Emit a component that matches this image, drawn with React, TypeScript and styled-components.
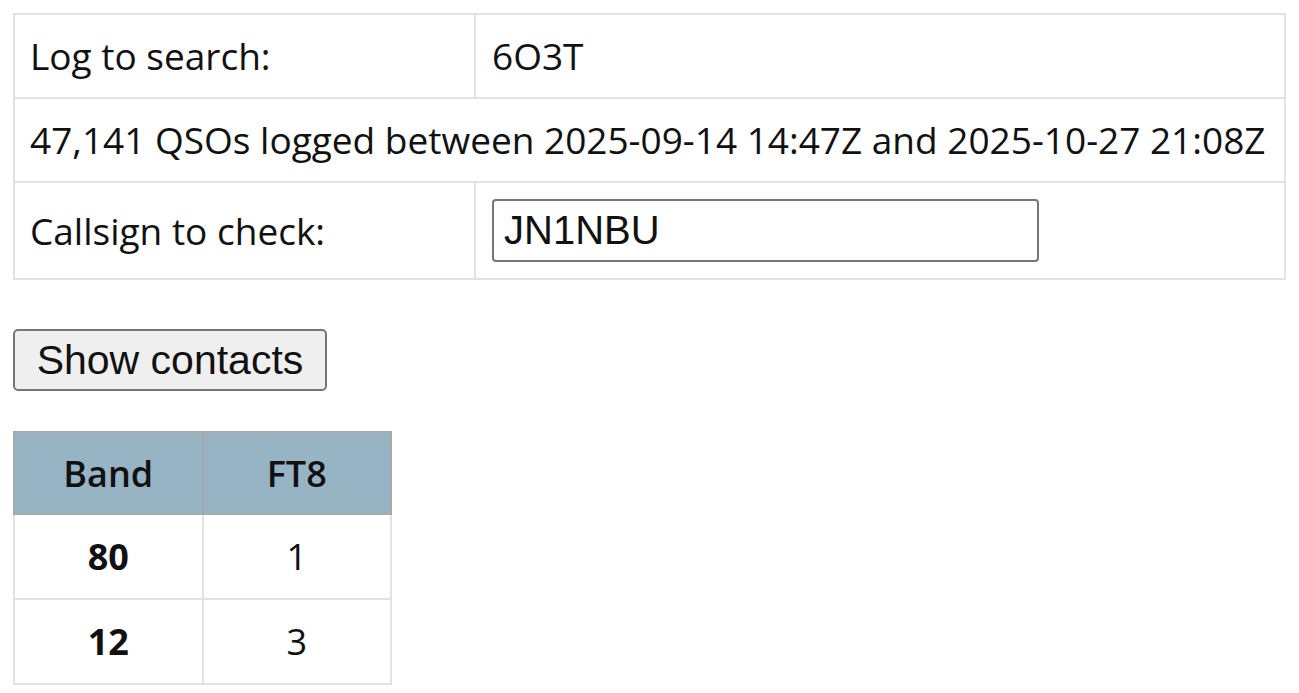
import React from "react";
import styled, { createGlobalStyle } from "styled-components";

const GlobalStyle = createGlobalStyle`
  body {
    margin: 13px;
    background: #fff;
    font-family: "Open Sans", sans-serif;
    color: #111;
  }
`;

const App = (): JSX.Element => {
  return (
    <>
      <GlobalStyle />
      <SearchTable>
        <tbody>
          <tr>
            <LabelCell>Log to search:</LabelCell>
            <ValueCell>6O3T</ValueCell>
          </tr>
          <tr>
            <LabelCell colSpan={2}>
              47,141 QSOs logged between 2025-09-14 14:47Z and 2025-10-27 21:08Z
            </LabelCell>
          </tr>
          <tr>
            <LabelCell>Callsign to check:</LabelCell>
            <ValueCell>
              <CallInput defaultValue="JN1NBU" />
            </ValueCell>
          </tr>
        </tbody>
      </SearchTable>
      <ShowButton>Show contacts</ShowButton>
      <ResultTable>
        <thead>
          <tr>
            <HeadCell>Band</HeadCell>
            <HeadCell>FT8</HeadCell>
          </tr>
        </thead>
        <tbody>
          <tr>
            <BandCell>80</BandCell>
            <CountCell>1</CountCell>
          </tr>
          <tr>
            <BandCell>12</BandCell>
            <CountCell>3</CountCell>
          </tr>
        </tbody>
      </ResultTable>
    </>
  );
};

const SearchTable = styled.table`
  border-collapse: collapse;
  width: 1273px;
  border: 2px solid #e2e2e2;
`;

const LabelCell = styled.td`
  border: 2px solid #e2e2e2;
  padding: 16px 15px;
  font-size: 37px;
  line-height: 50px;
  width: 429px;
  white-space: nowrap;
`;

const ValueCell = styled(LabelCell)`
  width: auto;
  padding-left: 16px;
`;

const CallInput = styled.input`
  display: block;
  box-sizing: border-box;
  width: 547px;
  height: 63px;
  border: 2px solid #767676;
  border-radius: 4px;
  padding: 0 10px;
  font-family: "Liberation Sans", Arial, sans-serif;
  font-size: 40px;
  color: #111;
`;

const ShowButton = styled.button`
  display: block;
  margin: 49px 0 40px;
  box-sizing: border-box;
  width: 314px;
  height: 62px;
  background: #efefef;
  border: 2px solid #767676;
  border-radius: 5px;
  font-family: "Liberation Sans", Arial, sans-serif;
  font-size: 41px;
  color: #111;
  padding: 0;
`;

const ResultTable = styled.table`
  border-collapse: collapse;
  width: 379px;
  border: 2px solid #e2e2e2;
`;

const HeadCell = styled.th`
  background: #96b4c3;
  border: 2px solid #a6a9aa;
  height: 80px;
  width: 50%;
  padding: 0;
  font-size: 36px;
  font-weight: 600;
  text-align: center;
`;

const CountCell = styled.td`
  border: 2px solid #e2e2e2;
  height: 83px;
  padding: 0;
  font-size: 36px;
  text-align: center;
`;

const BandCell = styled(CountCell)`
  font-weight: 700;
`;

export default App;
